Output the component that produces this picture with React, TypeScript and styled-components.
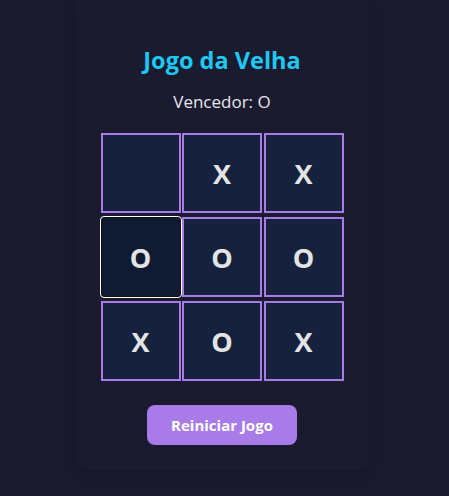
import React from "react";
import styled, { createGlobalStyle } from "styled-components";

const Global = createGlobalStyle`
  html, body {
    margin: 0;
    padding: 0;
    background: #1a1a2e;
    font-family: "Open Sans", "Noto Sans", sans-serif;
    color: #e0e0e0;
  }
`;

const Page = styled.div`
  width: 449px;
  height: 496px;
  box-sizing: border-box;
  padding-right: 5px;
  overflow: hidden;
  display: flex;
  justify-content: center;
  align-items: flex-start;
`;

const Card = styled.div`
  width: 293px;
  box-sizing: border-box;
  padding: 43px 0 25px;
  background: #1b1b2f;
  border-radius: 0 0 12px 12px;
  box-shadow: 0 6px 12px rgba(0, 0, 0, 0.12);
  display: flex;
  flex-direction: column;
  align-items: center;
`;

const Title = styled.h2`
  margin: 0;
  font-size: 23.5px;
  line-height: 34px;
  font-weight: 700;
  color: #1ec8f2;
`;

const Status = styled.p`
  margin: 13px 0 0;
  font-size: 17px;
  line-height: 24px;
  color: #e6e6ee;
`;

const Board = styled.div`
  margin-top: 19px;
  display: grid;
  grid-template-columns: repeat(3, 80px);
  grid-auto-rows: 80px;
  column-gap: 1.5px;
  row-gap: 4px;
`;

const Cell = styled.button<{ $focused?: boolean }>`
  box-sizing: border-box;
  width: 80px;
  height: 80px;
  padding: 0;
  margin: 0;
  background: ${(p) => (p.$focused ? "#111a33" : "#16213e")};
  border: 2px solid #a77be8;
  border-radius: 0;
  color: #e4e4e4;
  font-family: "Open Sans", "Noto Sans", sans-serif;
  font-size: 27px;
  font-weight: 700;
  cursor: pointer;
  display: flex;
  align-items: center;
  justify-content: center;
  ${(p) =>
    p.$focused
      ? `border: 1px solid #0f0f14; outline: 1px solid #ffffff; outline-offset: 0; border-radius: 3px;`
      : ""}
`;

const Button = styled.button`
  margin-top: 24px;
  width: 150px;
  height: 40px;
  border: none;
  border-radius: 8px;
  background: #a77be8;
  color: #ffffff;
  font-family: "Open Sans", "Noto Sans", sans-serif;
  font-size: 15px;
  font-weight: 700;
  cursor: pointer;
`;

const board = ["", "X", "X", "O", "O", "O", "X", "O", "X"];

export default function App() {
  return (
    <>
      <Global />
      <Page>
        <Card>
          <Title>Jogo da Velha</Title>
          <Status>Vencedor: O</Status>
          <Board>
            {board.map((v, i) => (
              <Cell key={i} $focused={i === 3}>
                {v}
              </Cell>
            ))}
          </Board>
          <Button>Reiniciar Jogo</Button>
        </Card>
      </Page>
    </>
  );
}
